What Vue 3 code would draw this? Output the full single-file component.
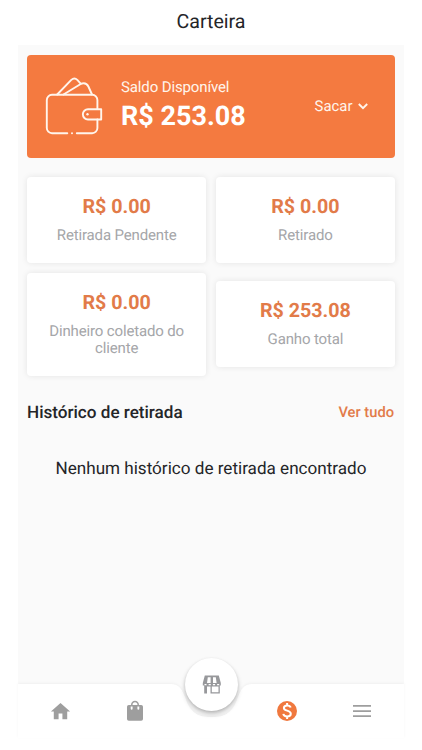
<script setup>
const stats = [
  { value: 'R$ 0.00', label: 'Retirada Pendente' },
  { value: 'R$ 0.00', label: 'Retirado' },
  { value: 'R$ 0.00', label: 'Dinheiro coletado do cliente' },
  { value: 'R$ 253.08', label: 'Ganho total' },
]
</script>

<template>
  <div class="screen">
    <header class="title">Carteira</header>

    <main class="content">
      <section class="balance">
        <svg class="wallet" viewBox="45 77 58 58" fill="none" stroke="currentColor" stroke-width="1.9" stroke-linecap="round" stroke-linejoin="round">
          <path d="M67.3 133.2H52a5.2 5.2 0 0 1-5.2-5.2V100a5.2 5.2 0 0 1 5.2-5.2H92.2a5.2 5.2 0 0 1 5.2 5.2V109M97.4 119.5V128a5.2 5.2 0 0 1-5.2 5.2H76.8" />
          <path d="M101.2 109.2H88a5.15 5.15 0 0 0 0 10.3H101.2Z" />
          <path d="M57.2 94.5 71.3 79.9Q74.4 77 77.3 79.9L80.7 83.6" />
          <path d="M63.5 94.5 80.3 84.2Q85.9 81.7 88.4 86.5L92 94.5" />
          <circle cx="72" cy="133.2" r="1" fill="currentColor" stroke="none" />
          <circle cx="87.5" cy="114.3" r="1.2" fill="currentColor" stroke="none" />
        </svg>
        <div class="balance-text">
          <div class="balance-label">Saldo Disponível</div>
          <div class="balance-value">R$ 253.08</div>
        </div>
        <div class="withdraw">
          <span>Sacar</span>
          <svg class="chevron" viewBox="0 0 10 7" fill="none" stroke="currentColor" stroke-width="1.9"><path d="M.8 1 5 5.2 9.2 1" /></svg>
        </div>
      </section>

      <section class="stats">
        <div v-for="stat in stats" :key="stat.label" class="stat">
          <div class="stat-value">{{ stat.value }}</div>
          <div class="stat-label">{{ stat.label }}</div>
        </div>
      </section>

      <section class="history">
        <h2>Histórico de retirada</h2>
        <a class="see-all">Ver tudo</a>
      </section>
      <p class="empty">Nenhum histórico de retirada encontrado</p>
    </main>

    <nav class="nav">
      <svg class="nav-shape" viewBox="0 0 386 56">
        <path d="M0 2H152C162 2 164 8 167 15C173 34 184 35 193.5 35S214 34 220 15C223 8 225 2 235 2H386V56H0Z" />
      </svg>
      <div class="nav-items">
        <svg class="icon home" viewBox="0 0 24 24"><path d="M10 20v-6h4v6h5v-8h3L12 3 2 12h3v8z" /></svg>
        <svg class="icon" viewBox="0 0 24 24"><path fill-rule="evenodd" d="M18.2 6h-2.2C16 3.4 14.4 1.8 12 1.8S8 3.4 8 6H5.800A1.8 1.8 0 0 0 4 7.800V20A1.8 1.8 0 0 0 5.800 21.800H18.200A1.8 1.8 0 0 0 20 20V7.800A1.8 1.8 0 0 0 18.200 6ZM12 3.300c1.500 0 2.500 1 2.500 2.700H9.500c0-1.700 1-2.700 2.500-2.700ZM7.700 7.500h1.900v2.300a.95.95 0 0 1-1.900 0ZM14.400 7.500h1.900v2.300a.95.95 0 0 1-1.900 0Z" /></svg>
        <span class="icon"></span>
        <svg class="icon active" viewBox="0 0 24 24">
          <circle cx="12" cy="12" r="10" />
          <path class="dollar" d="M15.7 8.6C15.3 7.2 14 6.4 12.2 6.4C10.2 6.4 8.9 7.4 8.9 9C8.9 12.5 15.8 10.8 15.8 14.7C15.8 16.5 14.3 17.5 12.2 17.5C10 17.5 8.6 16.5 8.3 14.9M12.1 4V6.500M12.1 17.500V20" />
        </svg>
        <svg class="icon" viewBox="0 0 24 24"><path d="M3 6H21V7.700H3ZM3 11.200H21V12.900H3ZM3 16.300H21V18H3Z" /></svg>
      </div>
      <button class="store" aria-label="Loja">
        <svg viewBox="0 0 20 20">
          <path fill-rule="evenodd" d="M2.800 .5H16.800L18.800 8V10.500H17.800V18.500H8.500V11.500H5V18.500H2.200V10.500H.8V8ZM5.800 2.200 5 8H8.600V2.200ZM11 2.200V8H14.600L13.800 2.200ZM9.800 11.500V17.200H16.500V11.500Z" />
          <path class="scallops" d="M2.500 9.600H4.500M6.600 9.600H8.800M10.900 9.600H13.100M15.100 9.600H17.200" />
        </svg>
      </button>
    </nav>
  </div>
</template>

<style>
body {
  margin: 0;
  background: #fff;
}
</style>

<style scoped>
.screen {
  box-sizing: border-box;
  width: 422px;
  height: 750px;
  padding: 0 18px;
  display: flex;
  flex-direction: column;
  overflow: hidden;
  font-family: Roboto, "Liberation Sans", sans-serif;
  text-rendering: geometricPrecision;
  color: #242528;
}
.title {
  height: 45px;
  line-height: 43px;
  text-align: center;
  font-size: 19.6px;
}
.content {
  flex: 1;
  padding: 9.5px 9px 0;
  background: #fafafa;
}
.balance {
  box-sizing: border-box;
  height: 103px;
  display: flex;
  align-items: center;
  padding: 0 27.5px 0 18px;
  border-radius: 4px;
  background: #f47a40;
  color: #fff5ec;
}
.wallet {
  width: 58px;
  height: 58px;
}
.balance-text {
  flex: 1;
  margin: -2px 0 0 18px;
}
.balance-label {
  font-size: 15px;
  letter-spacing: -0.13px;
  line-height: 22px;
}
.balance-value {
  font-size: 27px;
  line-height: 36px;
  font-weight: 700;
  color: #fff;
}
.withdraw {
  display: flex;
  align-items: center;
  gap: 5px;
  font-size: 14.9px;
}
.chevron {
  width: 10px;
  height: 7px;
}
.stats {
  display: grid;
  grid-template-columns: 1fr 1fr;
  align-items: center;
  gap: 9.5px;
  margin-top: 19.5px;
}
.stat {
  padding: 17px 20px 19px;
  border-radius: 4px;
  background: #fff;
  box-shadow: 0 0 6px rgba(0, 0, 0, 0.09);
  text-align: center;
}
.stat-value {
  font-size: 19.7px;
  line-height: 25px;
  font-weight: 700;
  color: #e27b49;
}
.stat-label {
  margin-top: 8px;
  font-size: 15px;
  letter-spacing: -0.15px;
  line-height: 17px;
  color: #a5a6a9;
}
.history {
  display: flex;
  justify-content: space-between;
  align-items: center;
  margin-top: 25px;
  height: 24px;
}
h2 {
  margin: 1px 0 0;
  font-size: 17.1px;
  font-weight: 500;
}
.see-all {
  margin: -1px 1px 0 0;
  font-size: 14.7px;
  font-weight: 500;
  color: #e27b49;
}
.empty {
  margin: 33px 0 0;
  text-align: center;
  font-size: 17.1px;
  line-height: 22px;
}
.nav {
  position: relative;
  height: 56px;
  margin-bottom: 12px;
  background: #fafafa;
}
.nav-shape {
  display: block;
  width: 386px;
  height: 56px;
  fill: #fff;
  filter: drop-shadow(0 -1px 1px rgba(0, 0, 0, 0.04));
}
.nav-items {
  position: absolute;
  inset: 2px 4px 0 5px;
  display: flex;
  justify-content: space-around;
  align-items: center;
}
.icon {
  width: 24px;
  height: 24px;
  fill: #9e9e9e;
}
.home {
  width: 23px;
  height: 23px;
}
.active {
  fill: #f0783e;
}
.dollar {
  fill: none;
  stroke: #fff;
  stroke-width: 2;
}
.store {
  position: absolute;
  left: 167px;
  top: -24px;
  width: 53px;
  height: 53px;
  padding: 0;
  display: grid;
  place-items: center;
  border: 0;
  border-radius: 50%;
  background: #fff;
  box-shadow: 0 3px 5px rgba(0, 0, 0, 0.22), 0 1px 3px rgba(0, 0, 0, 0.1);
}
.store svg {
  width: 20px;
  height: 20px;
  fill: #97989b;
}
.scallops {
  stroke: #fff;
  stroke-width: 1.2;
}
</style>
